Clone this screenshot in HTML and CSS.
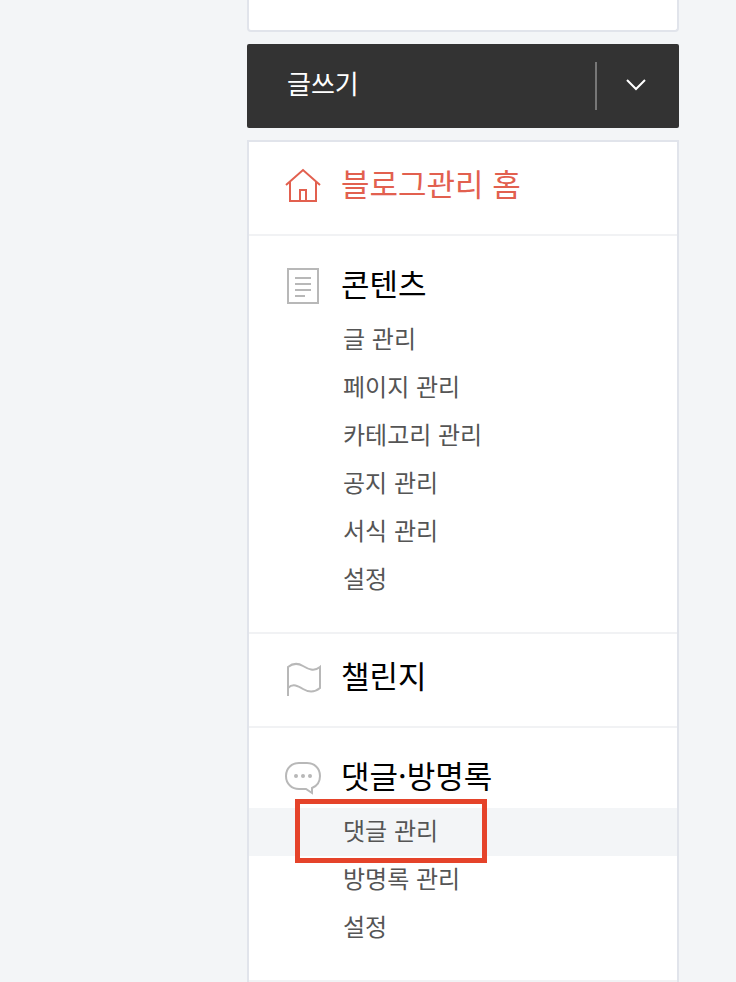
FILE: index.html
```html
<!DOCTYPE html>
<html lang="ko">
<head>
  <meta charset="UTF-8" />
  <meta name="viewport" content="width=device-width, initial-scale=1.0"/>
  <title>블로그관리 홈</title>
  <link rel="stylesheet" href="styles.css">
</head>
<body>
  <aside class="sidebar">
    <div class="profile-box"></div>

    <div class="write-box">
      <a href="#" class="link-write">글쓰기</a>
      <button type="button" class="btn-more" aria-label="더보기">
        <svg width="20" height="12" viewBox="0 0 20 12" fill="none" stroke="#fff" stroke-width="2">
          <path d="M1 1l9 9 9-9"/>
        </svg>
      </button>
    </div>

    <nav class="menu">
      <section class="menu-group">
        <a href="#" class="menu-title single home">
          <svg class="icon" viewBox="0 0 36 36">
            <path d="M1 17L18 2l17 15M5 14v19h26V14M15 33V22h6v11"/>
          </svg>
          <span>블로그관리 홈</span>
        </a>
      </section>

      <section class="menu-group">
        <a href="#" class="menu-title">
          <svg class="icon" viewBox="0 0 36 36">
            <path d="M3 1h30v34H3zM10 10h16M10 16h16M10 22h16M10 28h10"/>
          </svg>
          <span>콘텐츠</span>
        </a>
        <ul class="menu-list">
          <li><a href="#">글 관리</a></li>
          <li><a href="#">페이지 관리</a></li>
          <li><a href="#">카테고리 관리</a></li>
          <li><a href="#">공지 관리</a></li>
          <li><a href="#">서식 관리</a></li>
          <li><a href="#">설정</a></li>
        </ul>
      </section>

      <section class="menu-group">
        <a href="#" class="menu-title single">
          <svg class="icon" viewBox="0 0 36 36">
            <path d="M3 36V7C8 3 13 3 18 6s11 6 17 1v21c-6 5-12 4-17 1S8 23 3 28"/>
          </svg>
          <span>챌린지</span>
        </a>
      </section>

      <section class="menu-group">
        <a href="#" class="menu-title">
          <svg class="icon" viewBox="0 0 36 36">
            <path d="M14 3h8c7 0 13 5 13 13 0 6-3 10-8 12v5l-6-4h-7C7 29 1 24 1 16S7 3 14 3z"/>
            <g class="dots">
              <circle cx="11" cy="16" r="2"/>
              <circle cx="18" cy="16" r="2"/>
              <circle cx="25" cy="16" r="2"/>
            </g>
          </svg>
          <span>댓글·방명록</span>
        </a>
        <ul class="menu-list">
          <li class="on"><a href="#">댓글 관리</a></li>
          <li><a href="#">방명록 관리</a></li>
          <li><a href="#">설정</a></li>
        </ul>
      </section>
    </nav>
  </aside>
</body>
</html>
```
FILE: styles.css
```css
* {
  box-sizing: border-box;
}
body {
  margin: 0;
  background: #f3f5f7;
  font-family: "Noto Sans CJK KR", "Noto Sans", sans-serif;
  color: #000;
}
a {
  color: inherit;
  text-decoration: none;
}
.sidebar {
  display: flex;
  flex-direction: column;
  gap: 12px;
  margin: 0 57px 0 247px;
}
.profile-box {
  height: 32px;
  background: #fff;
  border: 2px solid #e1e4eb;
  border-top: 0;
  border-radius: 0 0 4px 4px;
}

/* write button */
.write-box {
  display: flex;
  align-items: center;
  height: 84px;
  background: #333;
  border-radius: 2px;
}
.link-write {
  flex: 1;
  padding: 0 0 6px 40px;
  font-size: 26px;
  line-height: 78px;
  color: #fff;
}
.btn-more {
  display: flex;
  align-items: center;
  justify-content: center;
  width: 84px;
  height: 48px;
  padding: 0 4px 2px 0;
  border: 0;
  border-left: 2px solid #777;
  background: none;
}

/* menu */
.menu {
  background: #fff;
  border: 2px solid #e1e4eb;
  border-bottom: 0;
}
.menu-group {
  border-bottom: 2px solid #f1f2f4;
}
.menu-title {
  display: flex;
  align-items: center;
  gap: 20px;
  height: 80px;
  padding: 20px 36px 0;
  font-size: 31px;
  line-height: 40px;
}
.menu-title.single {
  height: 92px;
  padding: 0 36px 4px;
}
.menu-title span {
  padding-bottom: 6px;
}
.home {
  color: #e2604f;
}
.icon {
  width: 36px;
  height: 36px;
  fill: none;
  stroke: #b8b8b8;
  stroke-width: 2;
}
.home .icon {
  stroke: #e2604f;
}
.icon .dots {
  fill: #b8b8b8;
  stroke: none;
}
.menu-list {
  margin: 0;
  padding: 0 0 28px;
  list-style: none;
}
.menu-list li {
  position: relative;
}
.menu-list a {
  display: block;
  padding: 0 0 4px 94px;
  font-size: 24px;
  line-height: 44px;
  color: #555;
}
.menu-list .on {
  background: #f3f5f7;
}
/* red frame over the current item */
.menu-list .on::after {
  content: "";
  box-sizing: border-box;
  position: absolute;
  top: -9px;
  left: 46px;
  width: 192px;
  height: 64px;
  border: 5px solid #e5432a;
}
```
